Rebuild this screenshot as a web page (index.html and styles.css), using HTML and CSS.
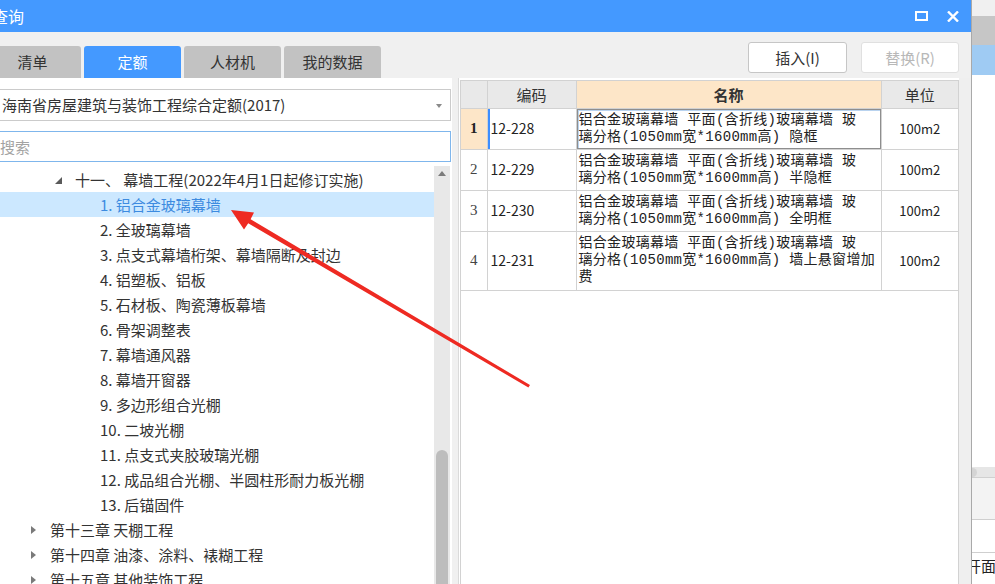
FILE: index.html
```html
<!DOCTYPE html>
<html lang="zh-CN">

<head>
    <meta charset="UTF-8">
    <meta name="viewport" content="width=device-width, initial-scale=1.0">
    <title>查询</title>
    <link rel="stylesheet" href="styles.css">
</head>

<body>
    <div class="screen">
        <div class="dialog">
            <div class="title-bar">
                <span class="title">查询</span>
                <div class="win-btns">
                    <svg width="13" height="10" viewBox="0 0 13 10"><rect x="1" y="1" width="11" height="8" fill="none" stroke="#fff" stroke-width="2"/></svg>
                    <svg width="12" height="11" viewBox="0 0 12 11"><path d="M1 0.5 L11 10.5 M11 0.5 L1 10.5" stroke="#fff" stroke-width="2.4"/></svg>
                </div>
            </div>

            <div class="toolbar">
                <div class="tabs">
                    <a href="javascript:;" class="tab">清单</a>
                    <a href="javascript:;" class="tab active">定额</a>
                    <a href="javascript:;" class="tab">人材机</a>
                    <a href="javascript:;" class="tab">我的数据</a>
                </div>
                <div class="actions">
                    <button class="btn">插入(I)</button>
                    <button class="btn disabled">替换(R)</button>
                </div>
            </div>

            <div class="main">
                <!-- 左侧定额库树 -->
                <div class="left-panel">
                    <div class="select">海南省房屋建筑与装饰工程综合定额(2017)<span class="caret"></span></div>
                    <div class="search">搜索</div>
                    <div class="tree-wrap">
                        <ul class="tree">
                            <li class="lv1"><span class="toggle open"></span>十一、 幕墙工程(2022年4月1日起修订实施)</li>
                            <li class="lv2 selected">1. 铝合金玻璃幕墙</li>
                            <li class="lv2">2. 全玻璃幕墙</li>
                            <li class="lv2">3. 点支式幕墙桁架、幕墙隔断及封边</li>
                            <li class="lv2">4. 铝塑板、铝板</li>
                            <li class="lv2">5. 石材板、陶瓷薄板幕墙</li>
                            <li class="lv2">6. 骨架调整表</li>
                            <li class="lv2">7. 幕墙通风器</li>
                            <li class="lv2">8. 幕墙开窗器</li>
                            <li class="lv2">9. 多边形组合光棚</li>
                            <li class="lv2">10. 二坡光棚</li>
                            <li class="lv2">11. 点支式夹胶玻璃光棚</li>
                            <li class="lv2">12. 成品组合光棚、半圆柱形耐力板光棚</li>
                            <li class="lv2">13. 后锚固件</li>
                            <li class="lv0"><span class="toggle"></span>第十三章 天棚工程</li>
                            <li class="lv0"><span class="toggle"></span>第十四章 油漆、涂料、裱糊工程</li>
                            <li class="lv0"><span class="toggle"></span>第十五章 其他装饰工程</li>
                        </ul>
                        <div class="scrollbar">
                            <span class="scroll-up"></span>
                            <span class="scroll-thumb"></span>
                        </div>
                    </div>
                </div>

                <!-- 右侧定额列表 -->
                <div class="right-panel">
                    <div class="grid-box">
                        <table class="grid">
                            <colgroup>
                                <col class="c-no">
                                <col class="c-code">
                                <col class="c-name">
                                <col class="c-unit">
                            </colgroup>
                            <thead>
                                <tr>
                                    <th></th>
                                    <th>编码</th>
                                    <th class="h-name">名称</th>
                                    <th>单位</th>
                                </tr>
                            </thead>
                            <tbody>
                                <tr class="current">
                                    <td class="no">1</td>
                                    <td class="code">12-228</td>
                                    <td class="name">铝合金玻璃幕墙 平面(含折线)玻璃幕墙 玻<br>璃分格(1050mm宽*1600mm高) 隐框</td>
                                    <td class="unit">100m2</td>
                                </tr>
                                <tr>
                                    <td class="no">2</td>
                                    <td class="code">12-229</td>
                                    <td class="name">铝合金玻璃幕墙 平面(含折线)玻璃幕墙 玻<br>璃分格(1050mm宽*1600mm高) 半隐框</td>
                                    <td class="unit">100m2</td>
                                </tr>
                                <tr>
                                    <td class="no">3</td>
                                    <td class="code">12-230</td>
                                    <td class="name">铝合金玻璃幕墙 平面(含折线)玻璃幕墙 玻<br>璃分格(1050mm宽*1600mm高) 全明框</td>
                                    <td class="unit">100m2</td>
                                </tr>
                                <tr class="tall">
                                    <td class="no">4</td>
                                    <td class="code">12-231</td>
                                    <td class="name">铝合金玻璃幕墙 平面(含折线)玻璃幕墙 玻<br>璃分格(1050mm宽*1600mm高) 墙上悬窗增加<br>费</td>
                                    <td class="unit">100m2</td>
                                </tr>
                            </tbody>
                        </table>
                    </div>
                </div>
                <div class="gutter"></div>
            </div>
        </div>

        <!-- 背后主窗口露出的部分 -->
        <div class="side">
            <div class="side-top"></div>
            <div class="side-gray"></div>
            <div class="side-blue"></div>
            <div class="side-white"></div>
            <div class="side-hscroll"><span></span></div>
            <div class="side-light"></div>
            <div class="side-row"></div>
            <div class="side-text">开面</div>
        </div>
    </div>

    <!-- 标注箭头 -->
    <svg class="mark" width="995" height="584" viewBox="0 0 995 584">
        <polygon fill="#ee2a22" points="231,210 254,212.5 250.6,219.2 530,385 528.4,387.4 248.2,223.2 244,229.5"/>
    </svg>
</body>

</html>
```

FILE: styles.css
```css
* {
    box-sizing: border-box;
}

body {
    margin: 0;
    width: 995px;
    height: 584px;
    overflow: hidden;
    font-family: "Noto Sans CJK SC", "Liberation Sans", sans-serif;
    color: #333;
    background: #fff;
}

.screen {
    display: flex;
    height: 584px;
    margin-left: -30px;
}

.dialog {
    width: 1002px;
    flex: none;
    display: flex;
    flex-direction: column;
    border-right: 1px solid #a9a9a9;
    background: #f0f0f0;
}

/* 标题栏 */
.title-bar {
    height: 32px;
    flex: none;
    display: flex;
    align-items: center;
    background: #4499ff;
    padding: 0 12px 0 22px;
}

.title {
    color: #fff;
    font-size: 16px;
}

.win-btns {
    margin-left: auto;
    display: flex;
    align-items: center;
    gap: 19px;
}

/* 页签和按钮 */
.toolbar {
    height: 46px;
    flex: none;
    display: flex;
    align-items: flex-start;
    padding: 0 12px 0 14px;
}

.tabs {
    display: flex;
    gap: 3px;
    margin-top: 14px;
}

.tab {
    width: 97px;
    height: 32px;
    line-height: 32px;
    text-align: center;
    font-size: 15px;
    color: #333;
    text-decoration: none;
    background: #c2c2c2;
    border-radius: 3px 3px 0 0;
}

.tab.active {
    background: #4499ff;
    color: #fff;
}

.actions {
    margin-left: auto;
    margin-top: 10px;
    display: flex;
    gap: 14px;
}

.btn {
    width: 99px;
    height: 31px;
    font-family: inherit;
    font-size: 15px;
    color: #333;
    background: #fff;
    border: 1px solid #c6c6c6;
    border-radius: 3px;
    padding: 0;
}

.btn.disabled {
    width: 98px;
    color: #b8b8b8;
    border-color: #e0e0e0;
}

/* 主体 */
.main {
    flex: 1;
    display: flex;
    min-height: 0;
}

.left-panel {
    width: 482px;
    flex: none;
    display: flex;
    flex-direction: column;
    background: #fff;
    padding: 11px 1px 0 28px;
}

.select {
    position: relative;
    height: 32px;
    line-height: 30px;
    border: 1px solid #cbcbcb;
    padding-left: 3px;
    font-size: 15px;
    color: #333;
}

.caret {
    position: absolute;
    right: 8px;
    top: 14px;
    border-style: solid;
    border-width: 4px 3.5px 0 3.5px;
    border-color: #8a8a8a transparent transparent transparent;
}

.search {
    height: 31px;
    margin-top: 10px;
    line-height: 29px;
    border: 1px solid #7fb6ec;
    padding-left: 1px;
    font-size: 15px;
    color: #a3a3a3;
}

.tree-wrap {
    flex: 1;
    display: flex;
    margin-top: 4px;
    min-height: 0;
}

.tree {
    flex: 1;
    list-style: none;
    margin: 0;
    padding: 1px 0 0 0;
}

.tree li {
    height: 25px;
    line-height: 25px;
    font-size: 15px;
    color: #333;
    white-space: nowrap;
    display: flex;
    align-items: center;
}

.tree .lv0 {
    padding-left: 32px;
}

.tree .lv1 {
    padding-left: 57px;
}

.tree .lv2 {
    padding-left: 102px;
}

.tree li.selected {
    background: #cce8ff;
    color: #3d8be0;
    margin-left: 2px;
    padding-left: 100px;
}

.toggle {
    width: 20px;
    flex: none;
    height: 25px;
    position: relative;
}

.toggle::before {
    content: "";
    position: absolute;
    left: 1px;
    top: 9px;
    border-style: solid;
    border-width: 4px 0 4px 5px;
    border-color: transparent transparent transparent #7a7a7a;
}

.toggle.open::before {
    left: 0;
    top: 10px;
    border-width: 0 0 7px 7px;
    border-color: transparent transparent #5a5a5a transparent;
}

.scrollbar {
    width: 16px;
    flex: none;
    margin-right: 1px;
    background: #e8e8e8;
    display: flex;
    flex-direction: column;
    align-items: center;
}

.scroll-up {
    margin-top: 5px;
    border-style: solid;
    border-width: 0 4.5px 5px 4.5px;
    border-color: transparent transparent #7b7b7b transparent;
}

.scroll-thumb {
    margin-top: auto;
    width: 12px;
    height: 134px;
    background: #bdbdbd;
    border-radius: 6px 6px 0 0;
}

.right-panel {
    width: 501px;
    flex: none;
    margin-left: 6px;
    border-left: 1px solid #dadada;
    background: #fff;
    padding: 2px 0 0 1px;
}

.grid-box {
    height: 100%;
    border: 1px solid #d2d2d2;
    border-bottom: none;
}

.grid {
    width: 100%;
    table-layout: fixed;
    border-collapse: collapse;
}

.c-no {
    width: 26px;
}

.c-code {
    width: 89px;
}

.c-name {
    width: 305px;
}

.grid th,
.grid td {
    border-right: 1px solid #d2d2d2;
    border-bottom: 1px solid #d2d2d2;
    padding: 0;
}

.grid th:last-child,
.grid td:last-child {
    border-right: none;
}

.grid th {
    height: 27px;
    background: #e9e9e9;
    font-weight: normal;
    font-size: 15px;
    color: #333;
}

.grid th.h-name {
    background: #fde6c8;
    font-weight: bold;
}

.grid td {
    height: 41px;
    font-size: 14px;
    line-height: 17px;
    color: #222;
    vertical-align: middle;
}

.grid tr.tall td {
    height: 59px;
}

.grid td.no {
    text-align: center;
    font-family: "Liberation Serif", serif;
    font-size: 15px;
    color: #444;
}

.grid td.code {
    padding-left: 3px;
}

.grid td.name {
    padding: 3px 2px 3px 2px;
    font-family: "Liberation Mono", "Noto Sans CJK SC", monospace;
    font-size: 14px;
    letter-spacing: 0.3px;
    white-space: nowrap;
}

.grid td.unit {
    text-align: center;
    font-size: 13px;
}

.grid tr.current td.no {
    background: #fde6c8;
    font-weight: bold;
    color: #222;
}

.grid tr.current td.code {
    box-shadow: inset 2px 0 0 #3d8eff;
}

.grid tr.current td.name {
    box-shadow: inset 0 0 0 1px #8e8e8e, inset 1px 1px 0 1px #b9d3ef;
}

.gutter {
    flex: 1;
    background: #efefef;
}

/* 右侧背景窗口 */
.side {
    flex: 1;
    display: flex;
    flex-direction: column;
    overflow: hidden;
    background: #fff;
}

.side-top {
    height: 16px;
    background: #f0f0f0;
}

.side-gray {
    height: 29px;
    background: #c6c6c6;
}

.side-blue {
    height: 30px;
    background: #9fcbf3;
}

.side-white {
    height: 392px;
}

.side-hscroll {
    height: 11px;
    background: #e6e6e6;
    border-bottom: 1px solid #d0d0d0;
    position: relative;
}

.side-hscroll span {
    position: absolute;
    left: -4px;
    top: 1px;
    width: 9px;
    height: 9px;
    border-radius: 50%;
    background: #d4d4d4;
}

.side-light {
    height: 42px;
    background: #f3f3f3;
    border-bottom: 1px solid #cfcfcf;
}

.side-row {
    height: 33px;
    border-bottom: 1px solid #cfcfcf;
}

.side-text {
    margin-left: -6px;
    font-size: 15px;
    line-height: 26px;
    color: #222;
    white-space: nowrap;
}

.mark {
    position: fixed;
    left: 0;
    top: 0;
    pointer-events: none;
}
```
